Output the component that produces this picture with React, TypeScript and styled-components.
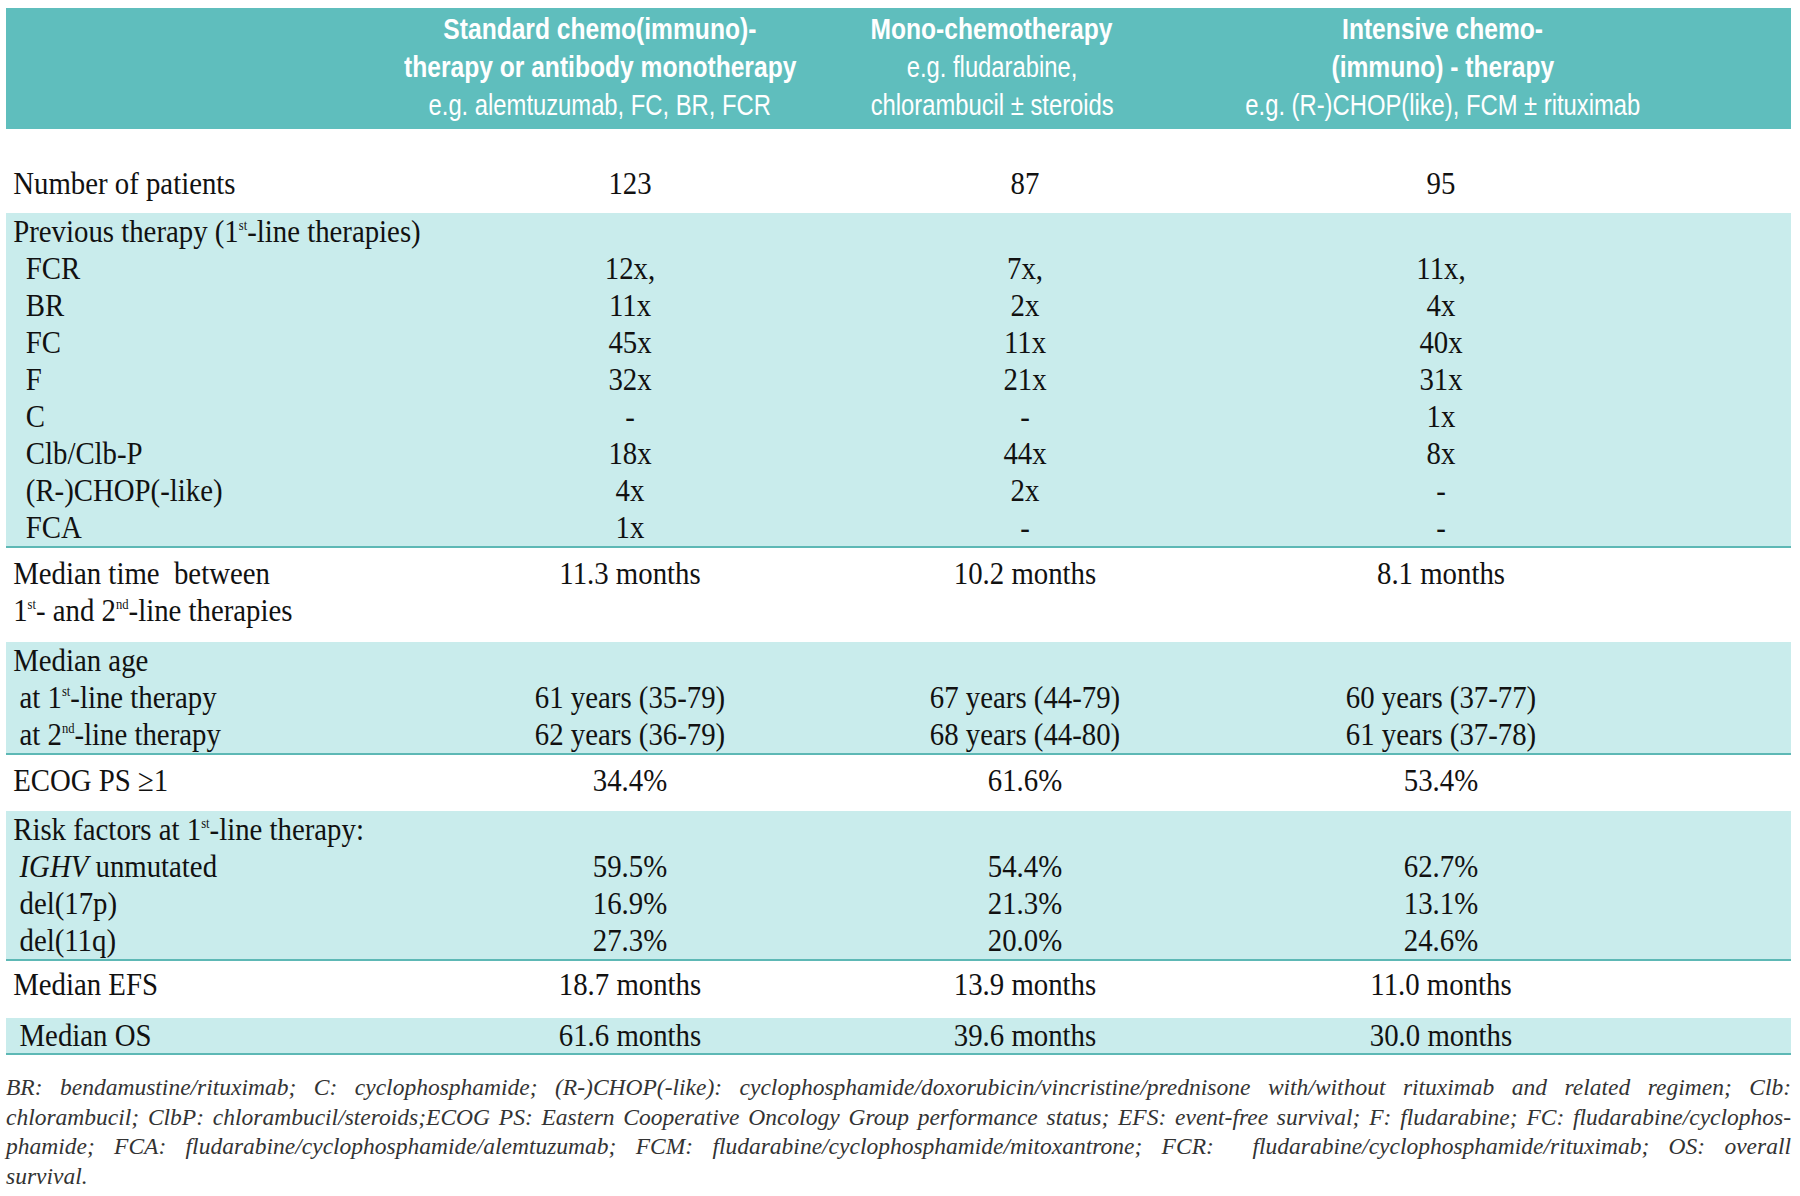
import React from "react";
import styled, { createGlobalStyle } from "styled-components";

const TEAL = "#5fbebd";
const PALE = "#c9ecec";
const RULE = "#5db8b5";

const GlobalStyle = createGlobalStyle`
  html, body {
    margin: 0;
    padding: 0;
    background: #ffffff;
  }
  body {
    font-family: "Liberation Serif", "Times New Roman", serif;
    color: #111111;
  }
`;

const Page = styled.div`
  width: 1785px;
  padding: 8px 0 0 6px;
`;

const HeaderBand = styled.div`
  display: grid;
  grid-template-columns: 384px 420px 364px 538px 1fr;
  background: ${TEAL};
  padding: 2px 0 5px;
  color: #ffffff;
  font-family: "Liberation Sans", Arial, sans-serif;
`;

const HeadCell = styled.div<{ $col: number }>`
  grid-column: ${(p) => p.$col};
  display: flex;
  flex-direction: column;
  align-items: center;
  line-height: 38px;
  white-space: nowrap;
`;

// the print face is a condensed grotesque; squeeze the regular one to match
const HeadTitle = styled.div`
  font-weight: 700;
  font-size: 30px;
  transform: scaleX(0.82);
`;

const HeadNote = styled.div`
  font-weight: 400;
  font-size: 29px;
  transform: scaleX(0.82);
`;

const Section = styled.section<{ $tone: "pale" | "plain"; $rule?: boolean; $pad?: string }>`
  display: flex;
  flex-direction: column;
  background: ${(p) => (p.$tone === "pale" ? PALE : "#ffffff")};
  border-bottom: ${(p) => (p.$rule ? `2px solid ${RULE}` : "none")};
  padding: ${(p) => p.$pad ?? "0"};
  font-size: 32px;
`;

const Row = styled.div<{ $h?: number }>`
  display: grid;
  grid-template-columns: 424px 400px 390px 442px;
  height: ${(p) => p.$h ?? 37}px;
  line-height: ${(p) => p.$h ?? 37}px;
`;

const Label = styled.div<{ $indent?: number; $span?: boolean }>`
  padding-left: ${(p) => 8 + (p.$indent ?? 0)}px;
  white-space: pre;
  grid-column: ${(p) => (p.$span ? "1 / -1" : "auto")};
  transform: scaleX(0.9);
  transform-origin: 0 50%;
`;

const Value = styled.div`
  text-align: center;
  white-space: nowrap;
  transform: scaleX(0.9);
`;

const Sup = styled.sup`
  font-size: 14px;
  line-height: 0;
  vertical-align: 12px;
`;

const Footnote = styled.div`
  margin-top: 18px;
  font-family: "Liberation Serif", "Times New Roman", serif;
  font-style: italic;
  font-size: 23.5px;
  line-height: 29.6px;
  color: #333333;
`;

const FootLine = styled.div<{ $last?: boolean }>`
  text-align: justify;
  text-align-last: ${(p) => (p.$last ? "left" : "justify")};
  white-space: pre-wrap;
`;

type RowData = {
  label: React.ReactNode;
  indent?: number;
  values?: string[];
  h?: number;
};

type SectionData = {
  tone: "pale" | "plain";
  rule?: boolean;
  pad?: string;
  rows: RowData[];
};

const sections: SectionData[] = [
  {
    tone: "plain",
    pad: "36px 0 11px",
    rows: [{ label: "Number of patients", values: ["123", "87", "95"] }],
  },
  {
    tone: "pale",
    rule: true,
    rows: [
      { label: <>Previous therapy (1<Sup>st</Sup>-line therapies)</> },
      { label: "FCR", indent: 14, values: ["12x,", "7x,", "11x,"] },
      { label: "BR", indent: 14, values: ["11x", "2x", "4x"] },
      { label: "FC", indent: 14, values: ["45x", "11x", "40x"] },
      { label: "F", indent: 14, values: ["32x", "21x", "31x"] },
      { label: "C", indent: 14, values: ["-", "-", "1x"] },
      { label: "Clb/Clb-P", indent: 14, values: ["18x", "44x", "8x"] },
      { label: "(R-)CHOP(-like)", indent: 14, values: ["4x", "2x", "-"] },
      { label: "FCA", indent: 14, values: ["1x", "-", "-"] },
    ],
  },
  {
    tone: "plain",
    pad: "7px 0 13px",
    rows: [
      { label: "Median time  between", values: ["11.3 months", "10.2 months", "8.1 months"] },
      { label: <>1<Sup>st</Sup>- and 2<Sup>nd</Sup>-line therapies</> },
    ],
  },
  {
    tone: "pale",
    rule: true,
    rows: [
      { label: "Median age" },
      {
        label: <>at 1<Sup>st</Sup>-line therapy</>,
        indent: 7,
        values: ["61 years (35-79)", "67 years (44-79)", "60 years (37-77)"],
      },
      {
        label: <>at 2<Sup>nd</Sup>-line therapy</>,
        indent: 7,
        values: ["62 years (36-79)", "68 years (44-80)", "61 years (37-78)"],
      },
    ],
  },
  {
    tone: "plain",
    pad: "7px 0 12px",
    rows: [{ label: "ECOG PS \u22651", values: ["34.4%", "61.6%", "53.4%"] }],
  },
  {
    tone: "pale",
    rule: true,
    rows: [
      { label: <>Risk factors at 1<Sup>st</Sup>-line therapy:</> },
      { label: <><i>IGHV</i> unmutated</>, indent: 7, values: ["59.5%", "54.4%", "62.7%"] },
      { label: "del(17p)", indent: 7, values: ["16.9%", "21.3%", "13.1%"] },
      { label: "del(11q)", indent: 7, values: ["27.3%", "20.0%", "24.6%"] },
    ],
  },
  {
    tone: "plain",
    pad: "5px 0 15px",
    rows: [{ label: "Median EFS", values: ["18.7 months", "13.9 months", "11.0 months"] }],
  },
  {
    tone: "pale",
    rule: true,
    rows: [{ label: "Median OS", indent: 7, h: 35, values: ["61.6 months", "39.6 months", "30.0 months"] }],
  },
];

const footLines = [
  "BR: bendamustine/rituximab; C: cyclophosphamide; (R-)CHOP(-like): cyclophosphamide/doxorubicin/vincristine/prednisone with/without rituximab and related regimen; Clb:",
  "chlorambucil; ClbP: chlorambucil/steroids;ECOG PS: Eastern Cooperative Oncology Group performance status; EFS: event-free survival; F: fludarabine; FC: fludarabine/cyclophos-",
  "phamide; FCA: fludarabine/cyclophosphamide/alemtuzumab; FCM: fludarabine/cyclophosphamide/mitoxantrone; FCR:  fludarabine/cyclophosphamide/rituximab; OS: overall",
  "survival.",
];

export default function App() {
  return (
    <>
      <GlobalStyle />
      <Page>
        <HeaderBand>
          <HeadCell $col={2}>
            <HeadTitle>Standard chemo(immuno)-</HeadTitle>
            <HeadTitle>therapy or antibody monotherapy</HeadTitle>
            <HeadNote>e.g. alemtuzumab, FC, BR, FCR</HeadNote>
          </HeadCell>
          <HeadCell $col={3}>
            <HeadTitle>Mono-chemotherapy</HeadTitle>
            <HeadNote>e.g. fludarabine,</HeadNote>
            <HeadNote>chlorambucil ± steroids</HeadNote>
          </HeadCell>
          <HeadCell $col={4}>
            <HeadTitle>Intensive chemo-</HeadTitle>
            <HeadTitle>(immuno) - therapy</HeadTitle>
            <HeadNote>e.g. (R-)CHOP(like), FCM ± rituximab</HeadNote>
          </HeadCell>
        </HeaderBand>

        {sections.map((s, si) => (
          <Section key={si} $tone={s.tone} $rule={s.rule} $pad={s.pad}>
            {s.rows.map((r, ri) => (
              <Row key={ri} $h={r.h}>
                <Label $indent={r.indent} $span={!r.values}>
                  {r.label}
                </Label>
                {r.values?.map((v, vi) => (
                  <Value key={vi}>{v}</Value>
                ))}
              </Row>
            ))}
          </Section>
        ))}

        <Footnote>
          {footLines.map((line, i) => (
            <FootLine key={i} $last={i === footLines.length - 1}>
              {line}
            </FootLine>
          ))}
        </Footnote>
      </Page>
    </>
  );
}
